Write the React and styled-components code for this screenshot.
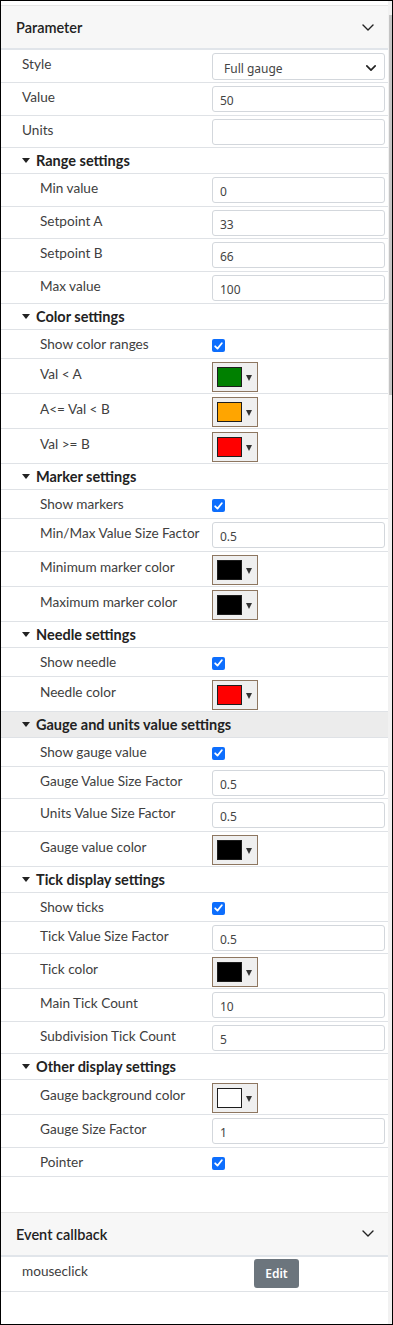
import React from 'react'
import styled, { createGlobalStyle } from 'styled-components'

const GlobalStyle = createGlobalStyle`
  html, body { margin: 0; padding: 0; background: #fff; }
  body { font-family: Lato, "Noto Sans", sans-serif; color: #212529; }
`

const Frame = styled.div`
  width: 393px;
  height: 1325px;
  box-sizing: border-box;
  border: 1px solid #000;
  display: flex;
  overflow: hidden;
`

const Content = styled.div`
  flex: 1;
  display: flex;
  flex-direction: column;
  padding-top: 4px;
`

const ScrollTrack = styled.div`
  width: 4px;
  background: #f1f1f1;
  padding-top: 14px;
  box-sizing: border-box;
`

const ScrollThumb = styled.div`
  width: 3px;
  margin-left: 1px;
  height: 380px;
  background: #c4c4c4;
`

const Panel = styled.div`
  display: flex;
  flex-direction: column;
`

const PanelHeader = styled.div`
  height: 45px;
  box-sizing: border-box;
  border-top: 1px solid #e6e6e6;
  border-bottom: 2px solid #e1e5ea;
  background: #f7f7f7;
  display: flex;
  align-items: center;
  justify-content: space-between;
  padding: 1px 14px 0 15px;
  font-size: 14.5px;
  font-weight: 600;
  color: #222;
`

const Row = styled.div`
  display: flex;
  height: ${p => p.$h}px;
  box-sizing: border-box;
  border-bottom: 1px solid #dfe2e6;
  background: ${p => (p.$hl ? '#ececec' : 'transparent')};
`

const Label = styled.div`
  width: 211px;
  box-sizing: border-box;
  padding-left: ${p => (p.$nested ? 39 : 21)}px;
  padding-top: ${p => p.$top || 5}px;
  font-size: 13.6px;
  line-height: 18px;
  color: #404040;
  white-space: nowrap;
`

const Control = styled.div`
  flex: 1;
  display: flex;
  align-items: flex-start;
  padding: ${p => p.$top || 3}px 3px 0 0;
`

const GroupHeader = styled(Row)`
  align-items: center;
  gap: 6px;
  padding-left: 21px;
  font-size: 14.5px;
  font-weight: 700;
  color: #222;
`

const Caret = styled.span`
  width: 0;
  height: 0;
  border-left: 4.5px solid transparent;
  border-right: 4.5px solid transparent;
  border-top: 5px solid #222;
`

const TextBox = styled.div`
  flex: 1;
  height: 26px;
  box-sizing: border-box;
  border: 1px solid #d3d7dc;
  border-radius: 3px;
  background: #fff;
  display: flex;
  align-items: center;
  justify-content: space-between;
  padding: 3px 8px 0 7px;
  font-family: "Noto Sans", sans-serif;
  font-size: 12px;
  color: #444;
`

const SelectBox = styled(TextBox)`
  height: 27px;
  padding-left: 11px;
`

const Check = styled.div`
  width: 13px;
  height: 13px;
  margin-top: 8px;
  border-radius: 2px;
  background: #0d6efd;
  display: flex;
  align-items: center;
  justify-content: center;
`

const ColorButton = styled.div`
  width: 46px;
  height: 30px;
  box-sizing: border-box;
  border: 1px solid #8d7660;
  background: #efefef;
  display: flex;
  align-items: center;
  padding-left: 4px;
  gap: 4px;
`

const Swatch = styled.div`
  width: 25px;
  height: 20px;
  box-sizing: border-box;
  border: 1px solid #1d1d1d;
  background: ${p => p.$color};
`

const SwatchArrow = styled.span`
  width: 0;
  height: 0;
  margin-top: 2px;
  border-left: 3px solid transparent;
  border-right: 3px solid transparent;
  border-top: 6px solid #333;
`

const Spacer = styled.div`
  height: ${p => p.$h}px;
`

const EditButton = styled.div`
  width: 45px;
  height: 29px;
  margin-left: 42px;
  border-radius: 3px;
  background: #6c757d;
  color: #fff;
  font-family: "Noto Sans", sans-serif;
  font-size: 12px;
  font-weight: 600;
  display: flex;
  align-items: center;
  justify-content: center;
`

const Chevron = ({ size = 12, stroke = 1.4 }) => (
  <svg width={size} height={size * 0.6} viewBox="0 0 12 7" fill="none">
    <path d="M1 1l5 5 5-5" stroke="#222" strokeWidth={stroke} strokeLinecap="round" strokeLinejoin="round" />
  </svg>
)

const CheckMark = () => (
  <svg width="9" height="8" viewBox="0 0 9 8" fill="none">
    <path d="M1.2 4.3l2.3 2.3L7.8 1.3" stroke="#fff" strokeWidth="1.8" strokeLinecap="round" strokeLinejoin="round" />
  </svg>
)

const InputRow = ({ label, value = '', nested = true }) => (
  <Row $h={32.5}>
    <Label $nested={nested}>{label}</Label>
    <Control>
      <TextBox>{value}</TextBox>
    </Control>
  </Row>
)

const CheckRow = ({ label }) => (
  <Row $h={29}>
    <Label $nested $top={5}>{label}</Label>
    <Control $top={1}>
      <Check><CheckMark /></Check>
    </Control>
  </Row>
)

const ColorRow = ({ label, color }) => (
  <Row $h={35}>
    <Label $nested $top={6}>{label}</Label>
    <Control>
      <ColorButton>
        <Swatch $color={color} />
        <SwatchArrow />
      </ColorButton>
    </Control>
  </Row>
)

const Group = ({ title, hl }) => (
  <GroupHeader $h={26} $hl={hl}>
    <Caret />
    {title}
  </GroupHeader>
)

export default function App() {
  return (
    <>
      <GlobalStyle />
      <Frame>
        <Content>
          <Panel>
            <PanelHeader>
              Parameter
              <Chevron />
            </PanelHeader>
            <Row $h={33}>
              <Label>Style</Label>
              <Control>
                <SelectBox>
                  Full gauge
                  <Chevron size={10} stroke={2} />
                </SelectBox>
              </Control>
            </Row>
            <InputRow label="Value" value="50" nested={false} />
            <InputRow label="Units" nested={false} />

            <Group title="Range settings" />
            <InputRow label="Min value" value="0" />
            <InputRow label="Setpoint A" value="33" />
            <InputRow label="Setpoint B" value="66" />
            <InputRow label="Max value" value="100" />

            <Group title="Color settings" />
            <CheckRow label="Show color ranges" />
            <ColorRow label="Val < A" color="#008000" />
            <ColorRow label="A<= Val < B" color="#ffa500" />
            <ColorRow label="Val >= B" color="#ff0000" />

            <Group title="Marker settings" />
            <CheckRow label="Show markers" />
            <InputRow label="Min/Max Value Size Factor" value="0.5" />
            <ColorRow label="Minimum marker color" color="#000" />
            <ColorRow label="Maximum marker color" color="#000" />

            <Group title="Needle settings" />
            <CheckRow label="Show needle" />
            <ColorRow label="Needle color" color="#ff0000" />

            <Group title="Gauge and units value settings" hl />
            <CheckRow label="Show gauge value" />
            <InputRow label="Gauge Value Size Factor" value="0.5" />
            <InputRow label="Units Value Size Factor" value="0.5" />
            <ColorRow label="Gauge value color" color="#000" />

            <Group title="Tick display settings" />
            <CheckRow label="Show ticks" />
            <InputRow label="Tick Value Size Factor" value="0.5" />
            <ColorRow label="Tick color" color="#000" />
            <InputRow label="Main Tick Count" value="10" />
            <InputRow label="Subdivision Tick Count" value="5" />

            <Group title="Other display settings" />
            <ColorRow label="Gauge background color" color="#fff" />
            <InputRow label="Gauge Size Factor" value="1" />
            <CheckRow label="Pointer" />
          </Panel>

          <Spacer $h={35} />

          <Panel>
            <PanelHeader>
              Event callback
              <Chevron />
            </PanelHeader>
            <Row $h={35}>
              <Label>mouseclick</Label>
              <Control $top={2}>
                <EditButton>Edit</EditButton>
              </Control>
            </Row>
          </Panel>
        </Content>
        <ScrollTrack>
          <ScrollThumb />
        </ScrollTrack>
      </Frame>
    </>
  )
}
